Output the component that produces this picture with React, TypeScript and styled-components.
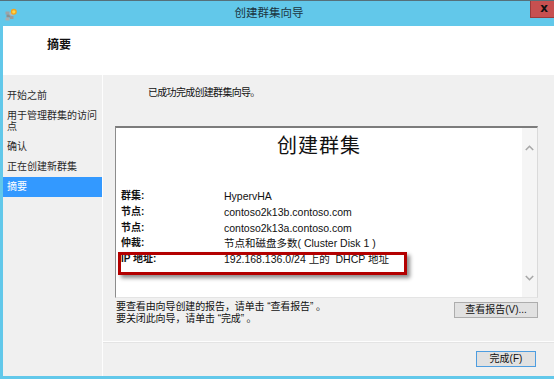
import React from 'react';
import styled, { createGlobalStyle } from 'styled-components';

const BLUE = '#62c8ea';
const UI_FONT = `"Liberation Sans", "Noto Sans CJK SC", sans-serif`;

const GlobalStyle = createGlobalStyle`
  html, body {
    margin: 0;
    padding: 0;
    background: #ffffff;
  }
  body {
    font-family: ${UI_FONT};
    -webkit-font-smoothing: none;
  }
`;

const navItems = [
  '开始之前',
  '用于管理群集的访问点',
  '确认',
  '正在创建新群集',
  '摘要',
];

const reportRows = [
  { label: '群集:', value: 'HypervHA' },
  { label: '节点:', value: 'contoso2k13b.contoso.com' },
  { label: '节点:', value: 'contoso2k13a.contoso.com' },
  { label: '仲裁:', value: '节点和磁盘多数( Cluster Disk 1 )' },
  { label: 'IP 地址:', value: '192.168.136.0/24 上的  DHCP 地址' },
];

const App: React.FC = () => {
  return (
    <>
      <GlobalStyle />
      <Window>
        <TitleBar>
          <AppIcon />
          <Title>创建群集向导</Title>
          <CloseButton>x</CloseButton>
        </TitleBar>
        <Frame>
          <Header>
            <HeaderTitle>摘要</HeaderTitle>
          </Header>
          <Body>
            <Nav>
              {navItems.map((item) => (
                <NavItem key={item} selected={item === '摘要'}>
                  {item}
                </NavItem>
              ))}
            </Nav>
            <Main>
              <Content>
                <Intro>已成功完成创建群集向导。</Intro>
                <ReportBox>
                  <Report>
                    <ReportTitle>创建群集</ReportTitle>
                    <Rows>
                      {reportRows.map((row, i) => (
                        <Row key={i}>
                          <Label>{row.label}</Label>
                          <Value>{row.value}</Value>
                        </Row>
                      ))}
                    </Rows>
                  </Report>
                  <ScrollBar>
                    <Chevron up />
                    <Chevron />
                  </ScrollBar>
                  <Highlight />
                </ReportBox>
                <ReportFooter>
                  <Hints>
                    <div>要查看由向导创建的报告，请单击 “查看报告” 。</div>
                    <div>要关闭此向导，请单击 “完成” 。</div>
                  </Hints>
                  <Button width={84}>查看报告(V)...</Button>
                </ReportFooter>
              </Content>
              <Footer>
                <Button width={60} primary>
                  完成(F)
                </Button>
              </Footer>
            </Main>
          </Body>
        </Frame>
      </Window>
    </>
  );
};

const AppIcon: React.FC = () => (
  <IconWrap>
    <svg width="13" height="13" viewBox="0 0 13 13">
      <rect x="0.5" y="3.5" width="4" height="3" fill="#9ea4a6" />
      <rect x="1.5" y="6.5" width="4" height="3" fill="#8a9092" />
      <rect x="0.5" y="9.5" width="4" height="3" fill="#a9aeb0" />
      <rect x="4.5" y="4.5" width="4" height="3" fill="#b3b8ba" />
      <rect x="5" y="8" width="3.5" height="3" fill="#989ea0" />
      <circle cx="8.8" cy="3.8" r="3" fill="#f6a51c" />
      <circle cx="8.8" cy="3.8" r="1.6" fill="#ffd84a" />
    </svg>
  </IconWrap>
);

const Chevron: React.FC<{ up?: boolean }> = ({ up }) => (
  <svg width="9" height="6" viewBox="0 0 9 6">
    <polyline
      points={up ? '0.8,5 4.5,1.3 8.2,5' : '0.8,1 4.5,4.7 8.2,1'}
      fill="none"
      stroke="#a8a8a8"
      strokeWidth="1.6"
    />
  </svg>
);

const Window = styled.div`
  width: 554px;
  height: 379px;
  display: flex;
  flex-direction: column;
  overflow: hidden;
`;

const TitleBar = styled.div`
  height: 26px;
  flex: none;
  display: flex;
  align-items: flex-start;
  background: ${BLUE};
  border-top: 1px solid #55707a;
  box-sizing: border-box;
`;

const IconWrap = styled.div`
  width: 13px;
  height: 13px;
  margin: 6px 0 0 5px;
`;

const Title = styled.div`
  flex: 1;
  text-align: center;
  padding-right: 10px;
  line-height: 24px;
  font-size: 11.5px;
  color: #1b3440;
`;

const CloseButton = styled.div`
  width: 24px;
  height: 17px;
  box-sizing: border-box;
  background: #c75050;
  border: 1px solid #9a3b3b;
  border-right: none;
  border-top: none;
  color: #111111;
  font-family: "DejaVu Sans", sans-serif;
  font-weight: bold;
  font-size: 12px;
  line-height: 14px;
  text-align: center;
  padding-left: 3px;
`;

const Frame = styled.div`
  flex: 1;
  display: flex;
  flex-direction: column;
  border-left: 3px solid ${BLUE};
  border-bottom: 3px solid ${BLUE};
  min-height: 0;
`;

const Header = styled.div`
  height: 49px;
  flex: none;
  background: #ffffff;
  padding: 12px 0 0 44px;
  box-sizing: border-box;
`;

const HeaderTitle = styled.div`
  font-size: 12px;
  font-weight: bold;
  line-height: 14px;
  color: #111111;
`;

const Body = styled.div`
  flex: 1;
  display: flex;
  min-height: 0;
`;

const Nav = styled.div`
  width: 99px;
  flex: none;
  background: #f0f0f0;
  border-right: 1px solid #fdfdfd;
  padding-top: 11px;
`;

const NavItem = styled.div<{ selected?: boolean }>`
  padding: 4px 2px 5px 4px;
  font-size: 10px;
  line-height: 11px;
  color: ${({ selected }) => (selected ? '#ffffff' : '#2a2a2a')};
  background: ${({ selected }) => (selected ? '#3399ff' : 'transparent')};
`;

const Main = styled.div`
  flex: 1;
  display: flex;
  flex-direction: column;
  background: #f0f0f0;
  min-width: 0;
`;

const Content = styled.div`
  flex: 1;
  padding: 11px 16px 0 12px;
  border-bottom: 1px solid #fdfdfd;
`;

const Intro = styled.div`
  margin-left: 33px;
  font-size: 10px;
  letter-spacing: -0.7px;
  line-height: 14px;
  color: #111111;
`;

const ReportBox = styled.div`
  position: relative;
  margin-top: 26px;
  height: 172px;
  box-sizing: border-box;
  display: flex;
  background: #ffffff;
  border-style: solid;
  border-width: 2px 1px 1px 1px;
  border-color: #7c7c7c #dadada #e4e4e4 #8c8c8c;
`;

const Report = styled.div`
  flex: 1;
  padding: 5px 0 0 5px;
  color: #000000;
`;

const ReportTitle = styled.div`
  text-align: center;
  font-family: "Noto Sans CJK SC", sans-serif;
  font-size: 20px;
  font-weight: 400;
  letter-spacing: 1px;
  line-height: 24px;
  padding-right: 5px;
  color: #111111;
`;

const Rows = styled.div`
  margin-top: 31px;
`;

const Row = styled.div`
  display: flex;
  height: 15.8px;
  line-height: 16px;
`;

const Label = styled.div`
  width: 103px;
  font-size: 10px;
  font-weight: bold;
  color: #111111;
`;

const Value = styled.div`
  font-size: 10.5px;
  color: #111111;
  white-space: pre;
`;

const ScrollBar = styled.div`
  width: 15px;
  background: #f5f5f5;
  display: flex;
  flex-direction: column;
  align-items: center;
  justify-content: space-between;
  padding: 17px 0 16px;
  box-sizing: border-box;
`;

const Highlight = styled.div`
  position: absolute;
  left: 2px;
  top: 124px;
  width: 289px;
  height: 23px;
  box-sizing: border-box;
  border: 3px solid #b30000;
  box-shadow: 3px 3px 4px rgba(0, 0, 0, 0.45);
`;

const ReportFooter = styled.div`
  margin-top: 3px;
  display: flex;
  justify-content: space-between;
  align-items: flex-start;
  padding-left: 1px;
`;

const Hints = styled.div`
  font-size: 10px;
  line-height: 12px;
  letter-spacing: -0.1px;
  color: #111111;
`;

const Button = styled.div<{ width: number; primary?: boolean }>`
  width: ${({ width }) => width}px;
  height: 16px;
  margin-top: ${({ primary }) => (primary ? 0 : 1)}px;
  box-sizing: border-box;
  background: #e1e1e1;
  border: 1px solid ${({ primary }) => (primary ? '#4d9de0' : '#adadad')};
  font-size: 10px;
  line-height: 14px;
  text-align: center;
  color: #111111;
`;

const Footer = styled.div`
  height: 34px;
  flex: none;
  display: flex;
  justify-content: flex-end;
  padding: 8px 18px 0 0;
  box-sizing: border-box;
  border-top: 1px solid #e4e4e4;
`;

export default App;
